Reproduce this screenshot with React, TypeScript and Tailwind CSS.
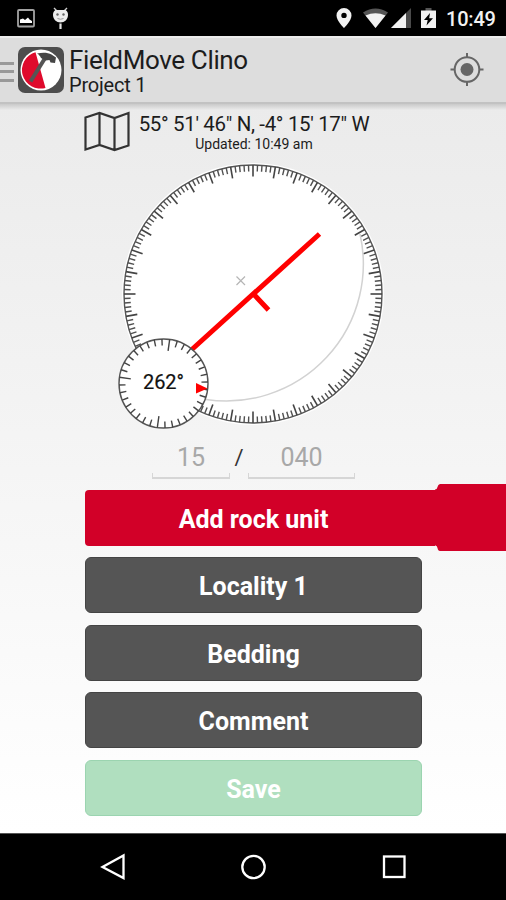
import React from 'react';

const ticks = (count: number) => Array.from({ length: count }, (_, i) => i);

const StatusBar = () => (
    <div className="h-9 shrink-0 bg-black flex items-center justify-between pl-[17px] pr-[10px]">
        <div className="flex items-center gap-[17px]">
            {/* Screenshot saved */}
            <svg width="18" height="19" viewBox="0 0 18 19">
                <rect x="1" y="1" width="16" height="16.5" rx="1" fill="none" stroke="#a3a3a3" strokeWidth="1.8" />
                <path d="M3 14v-3.500l3-1 2 1.500 3-2.500 1.500 2 2.500 1.500v2z" fill="#fff" />
            </svg>
            {/* Debug bug */}
            <svg width="17" height="23" viewBox="0 0 17 23">
                <path d="M2 1l3 3M15 1l-3 3" stroke="#cfcfcf" strokeWidth="1.4" />
                <path d="M3.500 3h10c2 1 2.500 3 2.500 5 0 4.500-3.500 7.500-7.500 7.500S1 12.500 1 8c0-2 .5-4 2.500-5z" fill="#ececec" />
                <circle cx="5.500" cy="7.500" r="1.200" fill="#666" />
                <circle cx="11.500" cy="7.500" r="1.200" fill="#666" />
                <path d="M5.500 11.500q3 1.500 6 0" fill="none" stroke="#999" />
                <path d="M8.500 16.500V22" stroke="#e5e5e5" strokeWidth="2.200" />
            </svg>
        </div>
        <div className="flex items-center">
            <svg className="mr-[11px]" width="16" height="20" viewBox="0 0 16 20">
                <path fillRule="evenodd" d="M8 0a7.500 7.500 0 0 0-7.500 7.500C.5 13 8 20 8 20s7.500-7 7.500-12.500A7.500 7.500 0 0 0 8 0zm0 4.700a2.700 2.700 0 1 1 0 5.400 2.700 2.700 0 0 1 0-5.400z" fill="#f2f2f2" />
            </svg>
            <svg className="mr-[3px]" width="25" height="20" viewBox="0 0 25 20">
                <path d="M0 4.500Q12.500-3.500 25 4.500L12.500 20z" fill="#555" />
                <path d="M2.500 7.500Q12.500 3 22.500 7.500L12.500 20z" fill="#f2f2f2" />
            </svg>
            <svg className="mr-[10px]" width="20" height="20" viewBox="0 0 20 20">
                <path d="M20 0v20H0z" fill="#4a4a4a" />
                <path d="M15 5v15H0z" fill="#f2f2f2" />
            </svg>
            <svg className="mr-[10px]" width="15" height="20" viewBox="0 0 15 20">
                <path d="M4.500 0h6v3h-6z" fill="#555" />
                <path d="M0 2.500h15V20H0z" fill="#f2f2f2" />
                <path d="M9 5L3 12h3.700L5.500 17.500 12 10.200H8.200z" fill="#000" />
            </svg>
            <span className="text-[20px] leading-none font-medium text-[#f2f2f2] w-[50px] mt-[2px] whitespace-nowrap tracking-[-0.2px]">10:49</span>
        </div>
    </div>
);

const AppIcon = () => (
    <svg width="46" height="46" viewBox="0 0 46 46">
        <rect width="46" height="46" rx="7" fill="#4d4d4d" />
        <circle cx="23" cy="23" r="20.500" fill="#fff" />
        <path d="M17.500 5.200A18.500 18.500 0 0 0 27.500 40.900z" fill="#df0a2c" />
        <path d="M12.500 34.500L26.500 12" stroke="#555" strokeWidth="4" />
        <path d="M19 6.500c6-1.500 11-1 14.500 1l4.500 3-1 5.500-4.500-.5-1-2.500-4 .5-4.500-2.500C22 9 21 7.500 19 6.500z" fill="#454545" />
    </svg>
);

const AppBar = () => (
    <header className="h-[68px] shrink-0 bg-[#dddddd] border-t-2 border-t-[#ececec] border-b-2 border-b-[#c2c2c2] flex items-center">
        <div className="w-[14px] h-[20px] mr-[4px] mt-[3px] flex flex-col justify-between">
            <div className="h-[3px] bg-[#999999]" />
            <div className="h-[3px] bg-[#999999]" />
            <div className="h-[3px] bg-[#999999]" />
        </div>
        <AppIcon />
        <div className="ml-[5px] mt-[3px] flex-1 whitespace-nowrap text-[#1c1c1c]">
            <h1 className="text-[26px] leading-[27px] tracking-[-0.36px]">FieldMove Clino</h1>
            <p className="text-[20px] leading-[23px] tracking-[-0.2px]">Project 1</p>
        </div>
        {/* Locate */}
        <svg className="mr-[22px]" width="34" height="34" viewBox="0 0 34 34" fill="none" stroke="#666" strokeWidth="2">
            <circle cx="17" cy="16.500" r="12.300" />
            <circle cx="17" cy="16.500" r="6.500" fill="#666" stroke="none" />
            <path d="M17 0v4.500M17 28.500V33M.5 16.500H5M29 16.500h4.500" />
        </svg>
    </header>
);

const Compass = () => (
    <svg className="block ml-[113px]" width="280" height="276" viewBox="113 160 280 276">
        <circle cx="253" cy="294" r="131" fill="#fff" />
        <circle cx="253" cy="294" r="129" fill="#fff" stroke="#555" strokeWidth="1.400" />
        {ticks(180).map((i) => (
            <line
                key={i}
                x1="253"
                x2="253"
                y1="165"
                y2={i % 5 === 0 ? 176.500 : 171.500}
                stroke={i % 5 === 0 ? '#444' : '#505050'}
                strokeWidth={i % 5 === 0 ? 1.600 : 1.400}
                transform={`rotate(${i * 2} 253 294)`}
            />
        ))}
        <path d="M360 234A137 137 0 0 1 206 399.500" fill="none" stroke="#d2d2d2" strokeWidth="1.500" />
        <path d="M236.500 276.500l8.500 8.500M245 276.500l-8.500 8.500" stroke="#b5b5b5" strokeWidth="1.200" />
        <path d="M319.500 234L188 353M254 294.500l14.500 15.500" stroke="#ff0000" strokeWidth="5" />

        {/* Heading dial */}
        <circle cx="163.500" cy="383.500" r="44.500" fill="#fff" stroke="#555" strokeWidth="1.400" />
        {ticks(36).map((i) => (
            <line
                key={i}
                x1="163.500"
                x2="163.500"
                y1="339"
                y2={i % 9 === 0 ? 350.500 : 345.500}
                stroke="#444"
                strokeWidth="1.400"
                transform={`rotate(${i * 10 + 8} 163.500 383.500)`}
            />
        ))}
        <path d="M196 383l11.500 5.500-11.500 5z" fill="#ff0000" />
        <text x="163.500" y="389" textAnchor="middle" fontSize="20" fill="#111" stroke="#111" strokeWidth="0.200">262°</text>
    </svg>
);

const DarkButton = ({ label }: { label: string }) => (
    <button className="h-14 pt-[4px] rounded-[6px] bg-[#555555] border border-[#444444] text-white text-[25px] font-bold">
        {label}
    </button>
);

const NavBar = () => (
    <nav className="h-[67px] shrink-0 bg-black border-t border-t-[#555]">
        <svg width="506" height="66" viewBox="0 834 506 66" fill="none" stroke="#fff" strokeWidth="2.300">
            <path d="M123.500 855.500v22.500L102.500 867z" />
            <circle cx="253.500" cy="867" r="11.200" />
            <rect x="384" y="856.500" width="20.500" height="20.500" />
        </svg>
    </nav>
);

export default function App() {
    return (
        <div className="w-[506px] h-[900px] overflow-hidden flex flex-col font-[Roboto,sans-serif]">
            <StatusBar />
            <AppBar />
            <main className="flex-1 flex flex-col bg-linear-to-b from-[#ebebeb] to-white">
                <div className="h-[6px] bg-linear-to-b from-[#cacaca] to-[#ebebeb]" />

                {/* Position */}
                <div className="h-[50px] pl-[84px] flex items-start">
                    <svg className="mt-[1px]" width="46" height="41" viewBox="0 0 46 41" fill="none" stroke="#333" strokeWidth="2.200">
                        <path d="M1.500 6.500L15.500 2l15 5L44.500 2v32.500L30.500 39l-15-5-14 4.500zM15.500 2v32M30.500 7v32" />
                    </svg>
                    <div className="ml-[8px] mt-[2px] w-[232px] text-center whitespace-nowrap text-[#1c1c1c]">
                        <p className="text-[20.5px] leading-[24px] tracking-[-0.35px]">55° 51' 46" N, -4° 15' 17" W</p>
                        <p className="text-[14px] leading-[16px]">Updated: 10:49 am</p>
                    </div>
                </div>

                <Compass />

                {/* Dip / azimuth */}
                <div className="h-[48px] pl-[152px] pt-[6px] flex text-[25px] leading-[32px] text-[#a8a8a8]">
                    <div className="w-[78px]">
                        <div className="h-[31px] text-center">15</div>
                        <div className="h-[6px] border-b-2 border-x border-[#d6d6d6]" />
                    </div>
                    <div className="w-[18px] text-center text-[22px] text-[#333]">/</div>
                    <div className="w-[107px]">
                        <div className="h-[31px] text-center">040</div>
                        <div className="h-[6px] border-b-2 border-x border-[#d6d6d6]" />
                    </div>
                </div>

                <div className="h-[67px] pl-[85px] flex items-center">
                    <button className="w-[350px] h-14 pt-[4px] pr-[13px] rounded-l-[4px] bg-[#d20028] text-white text-[25px] font-bold">
                        Add rock unit
                    </button>
                    {/* Tab running off the right edge */}
                    <svg className="block" width="71" height="67" viewBox="0 0 71 67">
                        <path d="M0 5.500Q2 5.500 2.500 3T5 0H71V67H5Q3 67 2.500 64T0 61.500z" fill="#d20028" />
                    </svg>
                </div>
                <div className="w-[337px] ml-[85px] mt-[6px] flex flex-col gap-[11.5px]">
                    <DarkButton label="Locality 1" />
                    <DarkButton label="Bedding" />
                    <DarkButton label="Comment" />
                    <button className="h-14 pt-[4px] rounded-[6px] bg-[#b0dfbf] border border-[#9bd4b0] text-white text-[25px] font-bold">
                        Save
                    </button>
                </div>
            </main>
            <NavBar />
        </div>
    );
}
